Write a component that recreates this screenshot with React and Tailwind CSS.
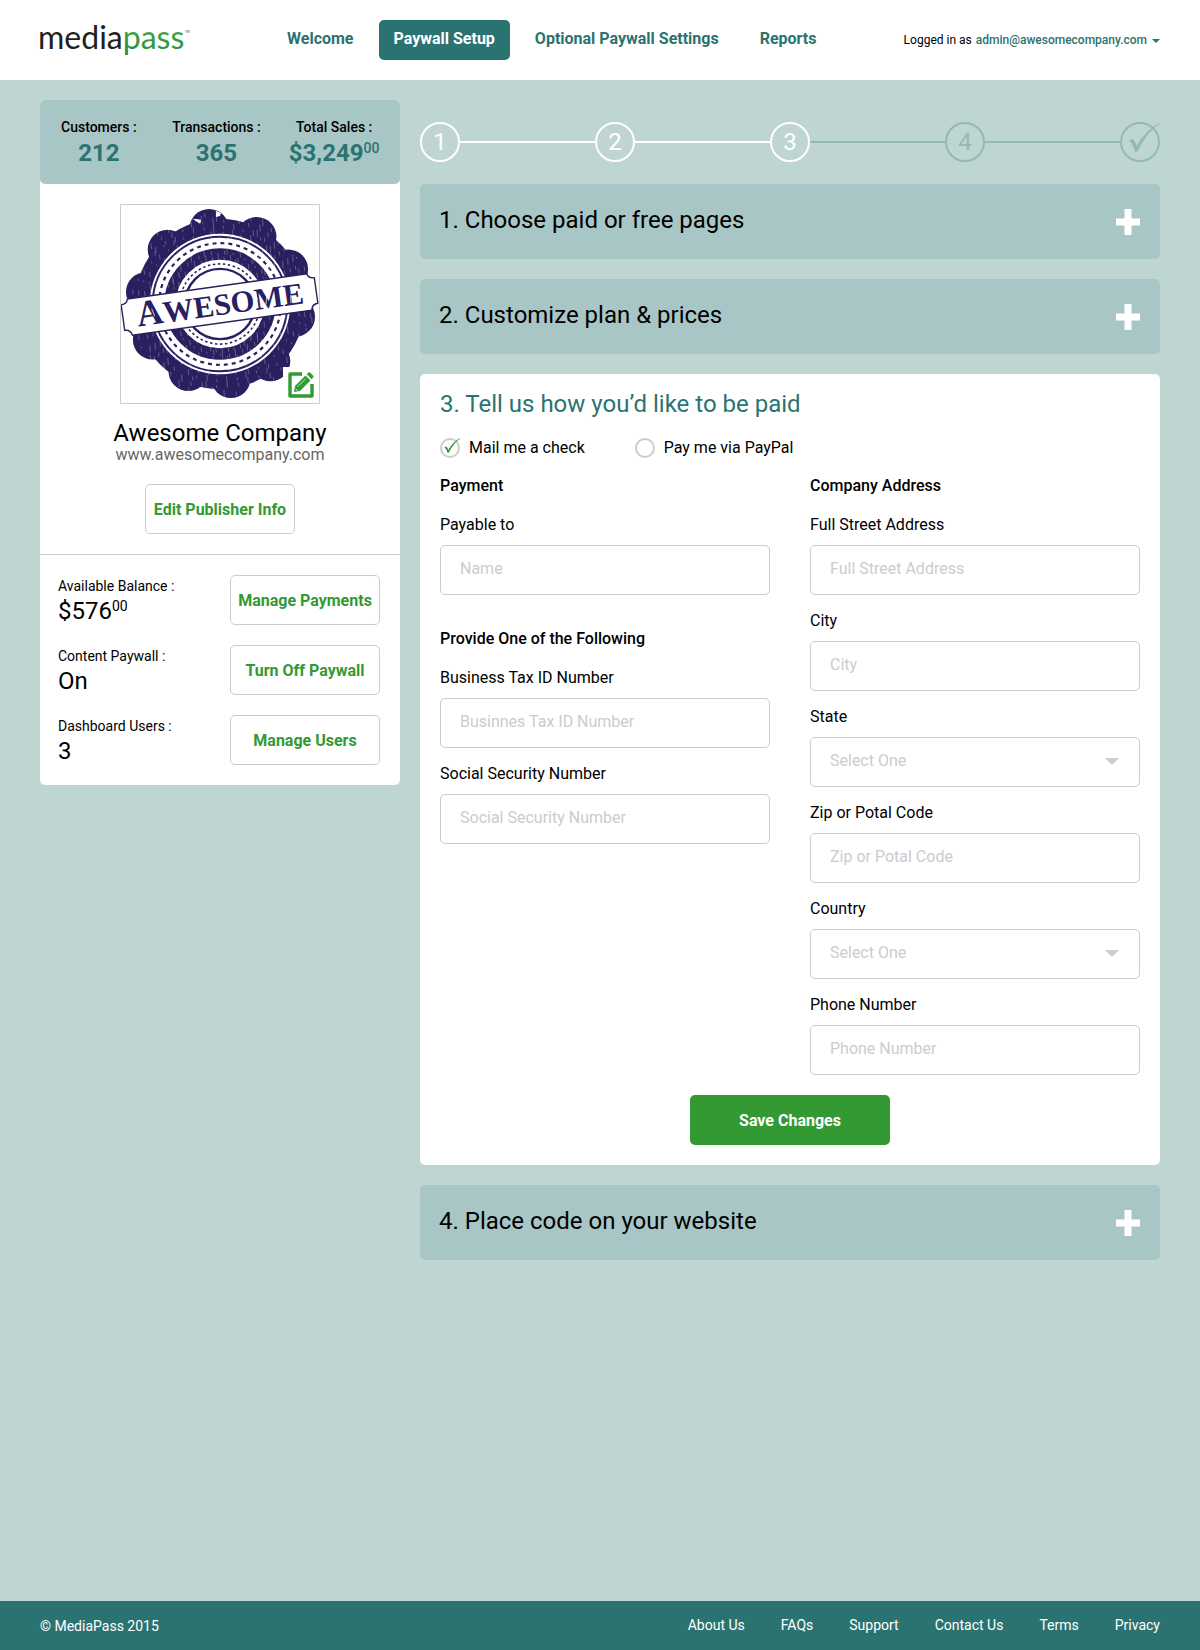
import { useState } from "react";

const navItems = ["Welcome", "Paywall Setup", "Optional Paywall Settings", "Reports"];

const footerLinks = ["About Us", "FAQs", "Support", "Contact Us", "Terms", "Privacy"];

const addressFields = [
  { id: "street", label: "Full Street Address" },
  { id: "city", label: "City" },
  { id: "state", label: "State", select: true },
  { id: "zip", label: "Zip or Potal Code" },
  { id: "country", label: "Country", select: true },
  { id: "phone", label: "Phone Number" },
];

// centre of every lobe around the edge of the seal
const lobes = [
  [89, 24],
  [137, 32],
  [169, 65],
  [176, 113],
  [151, 158],
  [111, 175],
  [68, 168],
  [32, 136],
  [25, 88],
  [47, 45],
];

// worn streaks printed over the seal, same set on every render
const scratches = Array.from({ length: 420 }, (_, i) => {
  const angle = (i * 137.5 * Math.PI) / 180;
  const radius = 44 + ((i * 29) % 51);
  return {
    x: 100 + Math.cos(angle) * radius,
    y: 97 + Math.sin(angle) * radius,
    length: 2 + ((i * 7) % 6),
  };
});

function CheckMark({ className }) {
  return (
    <svg viewBox="0 0 40 40" className={className} fill="currentColor" aria-hidden="true">
      <path d="M9 18.500Q11.500 16.500 13.500 17.500Q15 19 16.700 24Q25 8.500 39.500 .7L40 1.300Q26.500 10.500 18 28.500Q17 30 15.200 30Q13 22 9 18.500Z" />
    </svg>
  );
}

function Logo() {
  return (
    <a href="#home" aria-label="mediapass" className="block w-40">
      <svg viewBox="0 0 160 40" className="h-10 w-40 overflow-visible">
        <defs>
          <linearGradient id="pass" x1="0" y1="0" x2="0" y2="1">
            <stop offset="0.3" stopColor="#43a946" />
            <stop offset="1" stopColor="#1f8a3b" />
          </linearGradient>
        </defs>
        <text x="-2" y="29" fontSize="32" fontFamily="Lato, sans-serif" fill="#231f20">
          media<tspan fill="url(#pass)">pass</tspan>
        </text>
        <text x="145" y="13" fontSize="3" fontFamily="Lato, sans-serif" fill="#231f20">
          TM
        </text>
      </svg>
    </a>
  );
}

function Seal() {
  return (
    <svg viewBox="0 0 200 200" className="h-full w-full" role="img" aria-label="Awesome">
      <g fill="#29205f">
        <circle cx="100" cy="100" r="86" />
        {lobes.map(([x, y]) => (
          <circle key={`${x}-${y}`} cx={x} cy={y} r="20" />
        ))}
      </g>
      <circle cx="100" cy="100" r="71" fill="#fff" />
      <circle cx="100" cy="100" r="68" fill="none" stroke="#29205f" strokeWidth="2" />
      <circle
        cx="100"
        cy="100"
        r="61.500"
        fill="none"
        stroke="#29205f"
        strokeWidth="2.200"
        strokeDasharray="4 4.050"
      />
      <circle cx="100" cy="100" r="50.500" fill="none" stroke="#29205f" strokeWidth="11.500" />
      <circle
        cx="100"
        cy="100"
        r="40.500"
        fill="none"
        stroke="#29205f"
        strokeWidth="1.600"
        strokeDasharray="2.500 2.590"
      />
      <circle cx="100" cy="100" r="35.500" fill="none" stroke="#29205f" strokeWidth="2.400" />
      <g stroke="#fff" strokeWidth="0.600" opacity="0.450">
        {scratches.map((s, i) => (
          <line key={i} x1={s.x} y1={s.y} x2={s.x + 0.5} y2={s.y + s.length} />
        ))}
      </g>
      <path d="M73 14l8 1-1 4-5-3zM96 6l5 2-1 3-4 1z" fill="#fff" />
      <g transform="rotate(-8 100 100)">
        <path
          d="M8 82H191Q192 87 198 87V113Q192 113 191 119H8Q7 113 1 113V87Q7 87 8 82Z"
          fill="#fff"
          stroke="#29205f"
          strokeWidth="1.400"
        />
        <text
          x="100"
          y="111"
          textAnchor="middle"
          fontSize="31"
          fontWeight="700"
          fontFamily="'Liberation Serif', serif"
          fill="#29205f"
        >
          <tspan fontSize="37">A</tspan>WESOME
        </text>
        <path
          d="M31 95l2 8M45 99l1 9M62 92l2 7M70 104l-1 7M88 95l1 6M93 104l3 5M112 92l-2 6M122 103l1 7M137 93l1 8M148 98l-2 9M163 92l1 9M172 101l-1 8"
          stroke="#fff"
          strokeWidth="0.700"
        />
      </g>
    </svg>
  );
}

function EditIcon() {
  return (
    <svg viewBox="0 0 26 26" className="size-[26px]" aria-hidden="true">
      <path
        d="M14 2H2V24H24V12"
        fill="none"
        stroke="#393"
        strokeWidth="3.400"
        strokeLinejoin="round"
      />
      <path d="M17.500 3.500L22.500 8.500L12 19L6 20L7 14Z" fill="#393" />
      <path d="M18.700 2.300L20.500 .6Q21.500 0 22.500 .9L25 3.400Q26 4.500 25.200 5.500L23.700 7.300Z" fill="#393" />
      <path d="M9.500 14.800L17.500 6.800M7.500 16.500L9.700 18.700" stroke="#fff" strokeWidth="0.700" />
    </svg>
  );
}

function OutlineButton({ children }) {
  return (
    <button
      type="button"
      className="h-[50px] w-[150px] rounded-[5px] border border-[#ccc] bg-white pt-0.5 font-bold whitespace-nowrap text-[#393] hover:bg-gray-50"
    >
      {children}
    </button>
  );
}

function Stat({ label, value, cents }) {
  return (
    <div className="text-center">
      <p className="text-sm leading-6 font-medium">{label} :</p>
      <p className="text-2xl leading-7 font-bold text-[#2b7371]">
        {value}
        {cents && <sup className="-top-2 text-sm leading-none font-medium">{cents}</sup>}
      </p>
    </div>
  );
}

function AccountRow({ label, value, cents, action }) {
  return (
    <div className="flex items-center justify-between">
      <div>
        <p className="text-sm leading-[22px]">{label} :</p>
        <p className="text-2xl leading-7">
          {value}
          {cents && <sup className="-top-2 text-sm leading-none">{cents}</sup>}
        </p>
      </div>
      <OutlineButton>{action}</OutlineButton>
    </div>
  );
}

function Sidebar() {
  return (
    <aside className="w-[360px] shrink-0 rounded-[5px] bg-white">
      <div className="grid grid-cols-3 rounded-[5px] bg-[#a9c6c6] pt-[15px] pr-[7px] pb-[17px]">
        <Stat label="Customers" value="212" />
        <Stat label="Transactions" value="365" />
        <Stat label="Total Sales" value="$3,249" cents="00" />
      </div>

      <div className="flex flex-col items-center border-b border-[#ccc] py-5">
        <div className="relative size-[200px] border border-[#ccc]">
          <Seal />
          <button
            type="button"
            aria-label="Change logo"
            className="absolute right-0 bottom-0 flex size-9 items-center justify-center bg-white"
          >
            <EditIcon />
          </button>
        </div>
        <h2 className="mt-[17px] text-2xl leading-6">Awesome Company</h2>
        <a href="#company" className="mb-[19px] leading-5 text-[#666]">
          www.awesomecompany.com
        </a>
        <OutlineButton>Edit Publisher Info</OutlineButton>
      </div>

      <div className="flex flex-col gap-5 py-5 pr-5 pl-[18px]">
        <AccountRow label="Available Balance" value="$576" cents="00" action="Manage Payments" />
        <AccountRow label="Content Paywall" value="On" action="Turn Off Paywall" />
        <AccountRow label="Dashboard Users" value="3" action="Manage Users" />
      </div>
    </aside>
  );
}

function Steps({ current }) {
  return (
    <ol className="flex items-center py-[22px]">
      {[1, 2, 3, 4, 5].map((step) => {
        const color =
          step <= current ? "border-white text-white" : "border-[#93b8b7] text-[#93b8b7]";
        return (
          <li key={step} className={step === 1 ? "flex items-center" : "flex flex-1 items-center"}>
            {step > 1 && <span className={`flex-1 border-t-2 ${color}`} />}
            <span
              className={`relative flex size-10 items-center justify-center rounded-full border-2 text-2xl ${color}`}
            >
              {step < 5 ? step : <CheckMark className="absolute -inset-0.5 size-10" />}
            </span>
          </li>
        );
      })}
    </ol>
  );
}

function CollapsedSection({ title }) {
  return (
    <button
      type="button"
      aria-expanded="false"
      className="flex w-full items-center justify-between rounded-[5px] bg-[#a9c6c6] pr-5 pl-[19px] text-left"
    >
      <span className="pt-5 pb-[23px] text-2xl leading-8">{title}</span>
      <svg viewBox="0 0 24 26" className="h-[26px] w-6" aria-hidden="true">
        <path d="M8.500 0H15.500V9.500H24V16.500H15.500V26H8.500V16.500H0V9.500H8.500Z" fill="#fff" />
      </svg>
    </button>
  );
}

function Field({ id, label, placeholder, select }) {
  const control =
    "block h-[50px] w-full rounded-[5px] border border-[#ccc] bg-white px-[19px] placeholder:text-[#ccc] placeholder:opacity-100";

  return (
    <div>
      <label htmlFor={id} className="mb-2 block leading-6">
        {label}
      </label>
      {select ? (
        <div className="relative">
          <select id={id} defaultValue="" className={`${control} appearance-none pb-0.5 text-[#ccc]`}>
            <option value="">Select One</option>
          </select>
          <svg
            viewBox="0 0 14 7"
            className="pointer-events-none absolute top-[21px] right-[21px] h-[7px] w-3.5"
            aria-hidden="true"
          >
            <path d="M0 0H14L7 7Z" fill="#ccc" />
          </svg>
        </div>
      ) : (
        <input
          id={id}
          type="text"
          placeholder={placeholder || label}
          className={`${control} pb-1`}
        />
      )}
    </div>
  );
}

function MethodOption({ value, label, method, onChange }) {
  return (
    <label className="flex items-center gap-[9px]">
      <span className="relative size-5">
        <input
          type="radio"
          name="method"
          value={value}
          checked={method === value}
          onChange={() => onChange(value)}
          className="block size-5 appearance-none rounded-full border-2 border-[#ccc] bg-white"
        />
        {method === value && (
          <CheckMark className="pointer-events-none absolute inset-0 size-5 text-[#393]" />
        )}
      </span>
      <span className="leading-5">{label}</span>
    </label>
  );
}

function PaymentSection() {
  const [method, setMethod] = useState("check");

  return (
    <form
      className="rounded-[5px] bg-white px-5 pt-3.5 pb-5"
      onSubmit={(e) => e.preventDefault()}
    >
      <h2 className="text-2xl leading-8 text-[#2b7371]">3. Tell us how you’d like to be paid</h2>

      <div className="mt-[18px] flex gap-[50px]">
        <MethodOption value="check" label="Mail me a check" method={method} onChange={setMethod} />
        <MethodOption
          value="paypal"
          label="Pay me via PayPal"
          method={method}
          onChange={setMethod}
        />
      </div>

      <div className="mt-4 grid grid-cols-2 gap-10">
        <div>
          <h3 className="mb-[15px] leading-6 font-medium">Payment</h3>
          <Field id="payable" label="Payable to" placeholder="Name" />

          <h3 className="mt-8 mb-[15px] leading-6 font-medium">Provide One of the Following</h3>
          <div className="flex flex-col gap-3.5">
            <Field
              id="tax"
              label="Business Tax ID Number"
              placeholder="Businnes Tax ID Number"
            />
            <Field id="ssn" label="Social Security Number" />
          </div>
        </div>

        <div>
          <h3 className="mb-[15px] leading-6 font-medium">Company Address</h3>
          <div className="flex flex-col gap-3.5">
            {addressFields.map((field) => (
              <Field key={field.id} {...field} />
            ))}
          </div>
        </div>
      </div>

      <button
        type="submit"
        className="mx-auto mt-5 block h-[50px] w-[200px] rounded-[5px] bg-[#393] pt-0.5 font-bold text-white"
      >
        Save Changes
      </button>
    </form>
  );
}

function App() {
  return (
    <div className="flex min-h-screen flex-col bg-[#bfd5d2] font-[Roboto,sans-serif] text-base text-black">
      <header className="flex h-20 items-center bg-white px-10">
        <Logo />
        <nav className="ml-[87px] flex items-center gap-[25px]">
          {navItems.map((item) => (
            <a
              key={item}
              href="#nav"
              className={
                item === "Paywall Setup"
                  ? "flex h-10 items-center rounded-[5px] bg-[#2b7371] px-[15px] pb-0.5 font-bold text-white"
                  : "flex h-10 items-center pb-0.5 font-bold text-[#2b7371] last:ml-4"
              }
            >
              {item}
            </a>
          ))}
        </nav>
        <p className="ml-auto flex items-center gap-1 text-xs">
          Logged in as{" "}
          <button type="button" className="flex items-center gap-[5px] font-medium text-[#2b7371]">
            admin@awesomecompany.com
            <svg viewBox="0 0 8 4" className="mt-px h-1 w-2" aria-hidden="true">
              <path d="M0 0H8L4 4Z" fill="currentColor" />
            </svg>
          </button>
        </p>
      </header>

      <main className="flex flex-1 items-start gap-5 px-10 pt-5 pb-10">
        <Sidebar />
        <div className="min-w-0 flex-1">
          <Steps current={3} />
          <div className="flex flex-col gap-5">
            <CollapsedSection title="1. Choose paid or free pages" />
            <CollapsedSection title="2. Customize plan & prices" />
            <PaymentSection />
            <CollapsedSection title="4. Place code on your website" />
          </div>
        </div>
      </main>

      <footer className="flex h-[49px] items-center justify-between bg-[#2b7371] px-10 text-sm text-white">
        <p>© MediaPass 2015</p>
        <nav className="flex gap-9 pb-0.5">
          {footerLinks.map((link) => (
            <a key={link} href="#footer">
              {link}
            </a>
          ))}
        </nav>
      </footer>
    </div>
  );
}

export default App;
